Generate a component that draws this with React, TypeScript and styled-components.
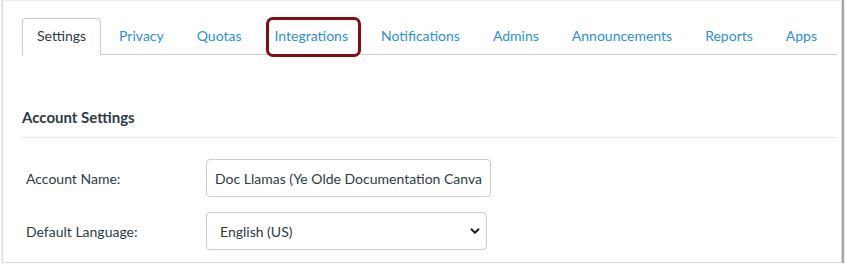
import React from "react";
import styled, { createGlobalStyle } from "styled-components";

const Global = createGlobalStyle`
    body {
        margin: 0;
        background: #ffffff;
        font-family: Lato, "Open Sans", "Liberation Sans", sans-serif;
    }
`;

const tabs = [
    "Settings",
    "Privacy",
    "Quotas",
    "Integrations",
    "Notifications",
    "Admins",
    "Announcements",
    "Reports",
    "Apps",
];

const App = () => {
    return (
        <>
            <Global />
            <Window>
                <TabStrip>
                    {tabs.map((t, i) => (
                        <Tab key={t} $active={i === 0} $marked={t === "Integrations"}>
                            {t}
                        </Tab>
                    ))}
                </TabStrip>
                <Heading>Account Settings</Heading>
                <Form>
                    <Label>Account Name:</Label>
                    <TextInput readOnly value="Doc Llamas (Ye Olde Documentation Canvas)" />
                    <Label>Default Language:</Label>
                    <SelectBox>
                        <span>English (US)</span>
                        <svg width="12" height="12" viewBox="0 0 12 12">
                            <path
                                d="M2.5 4.2 L6 7.7 L9.5 4.2"
                                fill="none"
                                stroke="#222"
                                strokeWidth="2"
                                strokeLinecap="round"
                                strokeLinejoin="round"
                            />
                        </svg>
                    </SelectBox>
                </Form>
            </Window>
        </>
    );
};

export default App;

const Window = styled.div`
    box-sizing: border-box;
    margin-left: 2px;
    width: 840px;
    height: 263px;
    border: 1px solid #dadada;
    border-top-color: #ececec;
    box-shadow: 1px 1px 1px 1px rgba(0, 0, 0, 0.35);
    padding: 17px 4px 0 19px;
    overflow: hidden;
`;

const TabStrip = styled.div`
    display: flex;
    align-items: flex-end;
    height: 36px;
    border-bottom: 1px solid #c7cdd1;
`;

const Tab = styled.div<{ $active?: boolean; $marked?: boolean }>`
    position: relative;
    box-sizing: border-box;
    display: flex;
    align-items: center;
    padding: 0 14px 3px 14px;
    margin-right: 3px;
    font-size: 14px;
    color: ${(p) => (p.$active ? "#2d3b45" : "#2a8fdc")};
    border: 1px solid ${(p) => (p.$active ? "#c7cdd1" : "transparent")};
    border-bottom: none;
    border-radius: 4px 4px 0 0;
    background: #fff;
    margin-bottom: ${(p) => (p.$active ? "-1px" : "0")};
    height: ${(p) => (p.$active ? "37px" : "36px")};

    ${(p) =>
        p.$marked &&
        `
        &::after {
            content: "";
            position: absolute;
            left: 5px;
            right: 1px;
            top: -2px;
            bottom: -3px;
            border: 3px solid #850c0f;
            border-radius: 7px;
            z-index: 2;
        }
    `}
`;

const Heading = styled.h2`
    margin: 53px 0 0 0;
    padding-bottom: 11px;
    font-size: 15px;
    font-weight: 700;
    color: #2d3b45;
    border-bottom: 1px solid #e6e6e6;
`;

const Form = styled.div`
    display: grid;
    grid-template-columns: 180px auto;
    row-gap: 15px;
    align-items: center;
    margin-top: 21px;
    padding-left: 4px;
`;

const Label = styled.label`
    font-size: 14px;
    color: #2d3b45;
`;

const TextInput = styled.input`
    box-sizing: border-box;
    width: 285px;
    height: 38px;
    padding: 0 8px;
    border: 1px solid #c7cdd1;
    border-radius: 4px;
    font-family: Lato, "Open Sans", "Liberation Sans", sans-serif;
    font-size: 14px;
    color: #2d3b45;
    outline: none;
`;

const SelectBox = styled.div`
    box-sizing: border-box;
    width: 281px;
    height: 38px;
    display: flex;
    align-items: center;
    justify-content: space-between;
    padding: 0 5px 0 13px;
    border: 1px solid #c7cdd1;
    border-radius: 4px;
    font-size: 14px;
    color: #2d3b45;
`;
